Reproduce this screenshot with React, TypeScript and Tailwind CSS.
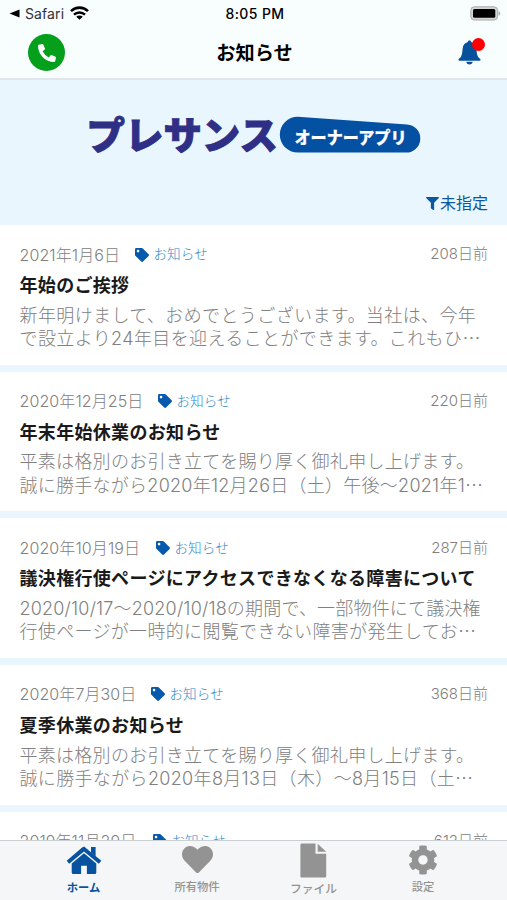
import React from "react";
import { FaTag, FaFilter, FaHeart, FaCog, FaPhoneAlt } from "react-icons/fa";

type Notice = {
  date: string;
  dateWidth: string;
  ago: string;
  title: string;
  lines: { text: string; tracking: string }[];
};

const notices: Notice[] = [
  {
    date: "2021年1月6日",
    dateWidth: "w-[115px]",
    ago: "208日前",
    title: "年始のご挨拶",
    lines: [
      { text: "新年明けまして、おめでとうございます。当社は、今年", tracking: "tracking-[0.4px]" },
      { text: "で設立より24年目を迎えることができます。これもひ⋯", tracking: "tracking-[0.38px]" },
    ],
  },
  {
    date: "2020年12月25日",
    dateWidth: "w-[138px]",
    ago: "220日前",
    title: "年末年始休業のお知らせ",
    lines: [
      { text: "平素は格別のお引き立てを賜り厚く御礼申し上げます。", tracking: "tracking-[0.28px]" },
      { text: "誠に勝手ながら2020年12月26日（土）午後〜2021年1⋯", tracking: "tracking-[0.26px]" },
    ],
  },
  {
    date: "2020年10月19日",
    dateWidth: "w-[136px]",
    ago: "287日前",
    title: "議決権行使ページにアクセスできなくなる障害について",
    lines: [
      { text: "2020/10/17〜2020/10/18の期間で、一部物件にて議決権", tracking: "tracking-[0.19px]" },
      { text: "行使ページが一時的に閲覧できない障害が発生してお⋯", tracking: "tracking-[0.33px]" },
    ],
  },
  {
    date: "2020年7月30日",
    dateWidth: "w-[131px]",
    ago: "368日前",
    title: "夏季休業のお知らせ",
    lines: [
      { text: "平素は格別のお引き立てを賜り厚く御礼申し上げます。", tracking: "tracking-[0.28px]" },
      { text: "誠に勝手ながら2020年8月13日（木）〜8月15日（土⋯", tracking: "tracking-[0.34px]" },
    ],
  },
  {
    date: "2019年11月29日",
    dateWidth: "w-[133px]",
    ago: "612日前",
    title: "",
    lines: [],
  },
];

function StatusBar() {
  return (
    <div className="grid h-[27px] grid-cols-3 items-center pl-[9px] pr-[6px] text-[14px] text-black">
      <div className="flex items-center">
        <svg width="11" height="9" viewBox="0 0 11 9">
          <path d="M0.5 4.5 10.5 0.5v8z" />
        </svg>
        <span className="ml-[5px] tracking-[0.1px] text-[#333]">Safari</span>
        <svg className="-mt-[2px] ml-[6px]" width="19" height="14" viewBox="0 0 19 14" fill="none" stroke="#000" strokeWidth="2.6">
          <path d="M1 5.1C5.8.5 13.2.5 18 5.1" />
          <path d="M4 8.6c3.1-2.9 7.9-2.9 11 0" />
          <path d="M9.5 13.8 6.2 10.7c1.8-1.6 4.8-1.6 6.6 0z" fill="#000" stroke="none" />
        </svg>
      </div>
      <div className="text-center text-[14px] font-medium tracking-[0.4px]">8:05 PM</div>
      <div className="flex justify-end">
        <svg width="31" height="15" viewBox="0 0 31 15">
          <rect x=".8" y=".8" width="26.8" height="13.2" rx="3.6" fill="#d5d6d6" stroke="#a9abab" />
          <rect x="3" y="3" width="22.3" height="8.8" rx="1.5" fill="#000" />
          <path d="M28.6 5.2c2.3.9 2.3 3.6 0 4.5z" fill="#a9abab" />
        </svg>
      </div>
    </div>
  );
}

function BellIcon() {
  return (
    <svg width="23" height="25" viewBox="0 0 23 25" fill="#07509c">
      <path d="M11.5.4c1 0 1.7.7 1.7 1.7 3 .8 4.9 3.2 5.2 6.6.4 5.3.9 8.2 3.6 10.1.9.7.6 1.9-.4 1.9H1.4c-1 0-1.3-1.2-.4-1.9 2.7-1.9 3.2-4.8 3.6-10.1.3-3.4 2.2-5.8 5.2-6.6C9.800 1.100 10.500.4 11.500.4z" />
      <path d="M8.3 21.7h6.4c-.3 1.7-1.5 2.7-3.2 2.7s-2.900-1-3.200-2.700z" />
    </svg>
  );
}

function HomeIcon() {
  return (
    <svg width="36" height="29" viewBox="0 0 36 29" fill="currentColor">
      <path d="M25 1h4.600v9.500L25 6.600z" />
      <path d="M18 .4 35.300 14.700l-2.500 3L18 5.500 3.200 17.700l-2.500-3L15.800 1.700a3.400 3.400 0 0 1 4.400 0z" />
      <path d="M18 7.300 30.300 17.500V26.500a1.500 1.500 0 0 1-1.500 1.500h-7.900v-8.200h-5.800v8.200H7.200A1.500 1.500 0 0 1 5.700 26.500v-9z" />
    </svg>
  );
}

function FileIcon() {
  return (
    <svg width="27" height="35" viewBox="0 0 27 35" fill="currentColor">
      <path d="M1.800.5h13.700v10.200h10.700v22.500c0 .8-.6 1.400-1.400 1.400h-23C1 34.600.4 34 .4 33.200V1.900C.4 1.100 1 .5 1.800.5z" />
      <path d="M17.700.8 26.200 8.700H17.700z" />
    </svg>
  );
}

function Header() {
  return (
    <header className="h-20 shrink-0 border-b-2 border-[#dfe7ed] bg-[#f8fdfe]">
      <StatusBar />
      <div className="grid h-[51px] grid-cols-3 items-center pl-[28px] pr-[26px]">
        <div className="flex size-[37px] items-center justify-center rounded-full bg-[#04a01c]">
          <FaPhoneAlt className="size-[18px] text-white" />
        </div>
        <h1 className="pt-[2px] text-center text-[19.2px] leading-none font-semibold whitespace-nowrap text-black">お知らせ</h1>
        <div className="relative justify-self-end">
          <BellIcon />
          <span className="absolute -top-[2px] -right-[4px] size-[13px] rounded-full bg-[#fe0000]" />
        </div>
      </div>
    </header>
  );
}

function Banner() {
  return (
    <div className="flex h-[145px] shrink-0 flex-col justify-between bg-[#e9f6fe] pt-[28px]">
      <svg className="ml-[80px]" width="350" height="56" viewBox="80 108 350 56">
        <path d="M297.700 116.700 407 124.400a13.900 13.900 0 0 1-1.500 28.100H297.700a17.900 17.900 0 0 1 0-35.800z" fill="#0450a2" />
        <text x="86.500" y="148.500" fontSize="38" fontWeight="900" fill="#302f86" stroke="#302f86" strokeWidth="1" textLength="191.500" lengthAdjust="spacingAndGlyphs">
          プレサンス
        </text>
        <text x="294.500" y="143.500" fontSize="16.500" fontWeight="900" fill="#fff" stroke="#fff" strokeWidth=".2" textLength="112" lengthAdjust="spacingAndGlyphs">
          オーナーアプリ
        </text>
      </svg>
      <div className="flex items-center justify-end pr-[19px] pb-[13px] text-[16px] leading-[18px] text-[#0c57a0]">
        <FaFilter className="mr-[1px] size-[13px]" />
        <span>未指定</span>
      </div>
    </div>
  );
}

function Card({ notice }: { notice: Notice }) {
  return (
    <article className="h-[146.65px] shrink-0 border-b-[7px] border-[#e9f6fe] bg-white pt-[19px] pr-[19px] pl-[19.5px]">
      <div className="flex h-[21px] items-center text-[16px] font-light text-[#808080]">
        <span className={`${notice.dateWidth} shrink-0 tracking-[0.1px] whitespace-nowrap`}>{notice.date}</span>
        <FaTag className="size-[14px] text-[#0759ae]" />
        <span className="ml-[5px] text-[13.6px] text-[#3187c6]">お知らせ</span>
        <span className="ml-auto text-[15px]">{notice.ago}</span>
      </div>
      <h2 className="mt-[7px] h-[27px] text-[18px] leading-[27px] font-semibold tracking-[0.32px] whitespace-nowrap text-[#1a1a1a]">
        {notice.title}
      </h2>
      <div className="mt-[4.7px] text-[18px] leading-[23.5px] font-light text-[#808080]">
        {notice.lines.map((line) => (
          <p key={line.text} className={`h-[23.5px] whitespace-nowrap ${line.tracking}`}>
            {line.text}
          </p>
        ))}
      </div>
    </article>
  );
}

function TabBar() {
  return (
    <nav className="grid h-[60px] shrink-0 grid-cols-[113px_114px_119px_100px] border-t border-[#ccd0d2] bg-[#f5f6f7] pl-[27px] text-[11.3px] leading-none font-medium text-[#939393]">
      <div className="flex flex-col items-center text-[#07539f]">
        <span className="mt-[5px]">
          <HomeIcon />
        </span>
        <span className="mt-[8px] font-bold">ホーム</span>
      </div>
      <div className="flex flex-col items-center">
        <FaHeart className="mt-[3px] size-[31px]" />
        <span className="mt-[7px]">所有物件</span>
      </div>
      <div className="flex flex-col items-center">
        <span className="mt-[2px]">
          <FileIcon />
        </span>
        <span className="mt-[6px] text-[11.8px]">ファイル</span>
      </div>
      <div className="flex flex-col items-center">
        <FaCog className="mt-[4px] size-[30px]" />
        <span className="mt-[7px]">設定</span>
      </div>
    </nav>
  );
}

export default function App() {
  return (
    <div className="flex h-[900px] w-[507px] flex-col overflow-hidden bg-white font-['Inter','Noto_Sans_CJK_JP',sans-serif]">
      <Header />
      <main className="flex min-h-0 flex-1 flex-col overflow-hidden">
        <Banner />
        {notices.map((notice) => (
          <Card key={notice.date} notice={notice} />
        ))}
      </main>
      <TabBar />
    </div>
  );
}
